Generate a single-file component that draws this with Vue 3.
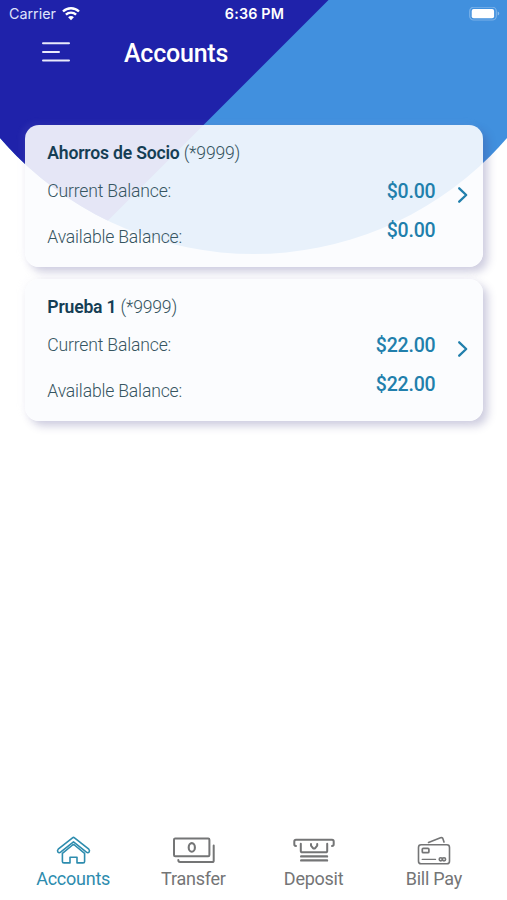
<script setup>
const accounts = [
  { name: 'Ahorros de Socio', number: '(*9999)', current: '$0.00', available: '$0.00' },
  { name: 'Prueba 1', number: '(*9999)', current: '$22.00', available: '$22.00' },
]
const tabs = [
  { id: 'accounts', label: 'Accounts' },
  { id: 'transfer', label: 'Transfer' },
  { id: 'deposit', label: 'Deposit' },
  { id: 'billpay', label: 'Bill Pay' },
]
</script>

<template>
  <div class="screen">
    <svg class="backdrop" viewBox="0 0 507 260" aria-hidden="true">
      <defs>
        <clipPath id="dome"><circle cx="253.5" cy="-81" r="335" /></clipPath>
      </defs>
      <g clip-path="url(#dome)">
        <rect width="507" height="260" fill="#4190de" />
        <path d="M0 0H328.5L68.5 260H0Z" fill="#1f22aa" />
      </g>
    </svg>

    <div class="status">
      <div class="carrier">
        <span>Carrier</span>
        <svg width="18" height="14" viewBox="0 0 18 14" fill="none" stroke="#fff" stroke-width="2.4">
          <path d="M1 4.5C5.5.1 12.5.1 17 4.5" />
          <path d="M3.9 7.7C6.8 4.9 11.2 4.9 14.1 7.7" />
          <path d="M9 13.2 6.1 10.2C7.7 8.7 10.3 8.7 11.9 10.2Z" fill="#fff" stroke="none" />
        </svg>
      </div>
      <span class="time">6:36 PM</span>
      <svg class="battery" width="31" height="14" viewBox="0 0 31 14">
        <rect x=".7" y=".2" width="26.6" height="12.8" rx="4" fill="none" stroke="#fff" stroke-opacity=".3" stroke-width="1.2" />
        <rect x="2.7" y="2" width="22.4" height="9.2" rx="2" fill="#fff" />
        <path d="M28.7 4.6v4q1.6-.5 1.6-2t-1.6-2Z" fill="#fff" fill-opacity=".4" />
      </svg>
    </div>

    <header class="header">
      <svg class="menu" width="28" height="22" viewBox="0 0 28 22" stroke="#e9eafb" stroke-width="2" stroke-linecap="round">
        <path d="M1 2.3H27M1 11H17M1 19.5H27" />
      </svg>
      <h1>Accounts</h1>
    </header>

    <main class="list">
      <article v-for="a in accounts" :key="a.name" class="card">
        <div class="info">
          <div class="title"><b>{{ a.name }}</b> <span>{{ a.number }}</span></div>
          <div class="label">Current Balance:</div>
          <div class="label second">Available Balance:</div>
        </div>
        <div class="amounts">
          <div>{{ a.current }}</div>
          <div>{{ a.available }}</div>
        </div>
        <svg class="chevron" width="12" height="18" viewBox="0 0 12 18" fill="none" stroke="#217fac" stroke-width="2.3" stroke-linecap="round" stroke-linejoin="round">
          <path d="M2.2 2.3 9.2 9 2.2 15.7" />
        </svg>
      </article>
    </main>

    <nav class="tabs">
      <div v-for="t in tabs" :key="t.id" class="tab" :class="{ active: t.id === 'accounts' }">
        <svg width="44" height="30" viewBox="0 0 44 30" fill="none" stroke="currentColor" stroke-width="1.6" stroke-linecap="round" stroke-linejoin="round">
          <g v-if="t.id === 'accounts'" transform="translate(.5 0)">
            <path d="M21 2.8Q22 2 23 2.8L37.3 14.2Q38.5 15.4 37.6 17Q36.5 18.4 34.9 17.2L22 6.9 9.1 17.2Q7.5 18.4 6.4 17Q5.5 15.4 6.7 14.2Z" />
            <path d="M10.9 18.4V26.4Q10.9 27.9 12.4 27.9H18.5V22.2H25.5V27.9H31.6Q33.1 27.9 33.1 26.4V18.4L22.9 10Q22 9.3 21.1 10Z" />
          </g>
          <g v-else-if="t.id === 'transfer'" transform="translate(.5 0)" stroke-width="2">
            <rect x="2.5" y="3.5" width="35.4" height="17.8" rx="1.2" />
            <ellipse cx="20.3" cy="12.4" rx="3.1" ry="4.3" stroke-width="2.1" />
            <path d="M6.8 25Q6.8 27 8.6 27H40.8Q42.2 27 42.2 25.4V10.4" />
          </g>
          <g v-else-if="t.id === 'deposit'" stroke-width="2">
            <path d="M4 11Q2.3 11 2.3 9.3V6.5Q2.3 4.8 4 4.8H40Q41.7 4.8 41.7 6.5V9.3Q41.7 11 40 11" />
            <path d="M8.8 8.8V15.9Q8.8 17.3 10.4 17.3H33.6Q35.2 17.3 35.2 15.9V8.8" />
            <path d="M19 9V10.6L21.2 13.4H23L25.2 10.6V9" />
            <path d="M9.2 21.4H35M9.2 25.4H35" stroke-width="2.4" />
          </g>
          <g v-else stroke-width="1.6">
            <rect x="6.5" y="9.8" width="31" height="19" rx="2.6" />
            <path d="M16.5 7.5 28.5 2.8Q30.4 2.1 31 3.9L32 7.1" />
            <rect x="10.3" y="13.3" width="6.6" height="4.4" rx="1" stroke-width="1.7" />
            <path d="M10.3 24.4H23.5" stroke-width="1.4" />
            <circle cx="28.8" cy="24.3" r="1.6" />
            <circle cx="32" cy="24.3" r="1.6" />
          </g>
        </svg>
        <span>{{ t.label }}</span>
      </div>
    </nav>
  </div>
</template>

<style>
body { margin: 0; background: #fff; }
</style>

<style scoped>
.screen {
  position: relative;
  display: flex;
  flex-direction: column;
  width: 507px;
  height: 900px;
  overflow: hidden;
  background: #fff;
  font-family: Roboto, sans-serif;
}
.backdrop { position: absolute; top: 0; left: 0; width: 507px; height: 260px; }
.status {
  position: relative;
  display: grid;
  grid-template-columns: 1fr auto 1fr;
  align-items: center;
  height: 28px;
  padding: 0 7px 0 9px;
  color: #fff;
  font: 400 14.3px/28px Inter, sans-serif;
}
.carrier { display: flex; align-items: center; gap: 6px; color: #dfe2fb; }
.time { font-weight: 600; letter-spacing: .2px; }
.battery { justify-self: end; }
.header {
  position: relative;
  display: flex;
  align-items: center;
  gap: 54px;
  height: 50px;
  padding: 0 42px;
}
.menu { margin-bottom: 2px; }
.header h1 { margin: 1px 0 0; color: #fff; font-size: 25px; font-weight: 500; letter-spacing: -.22px; line-height: 30px; }
.list {
  position: relative;
  display: flex;
  flex-direction: column;
  gap: 12px;
  padding: 46.5px 24px 0 25px;
}
.card {
  display: flex;
  box-sizing: border-box;
  height: 142px;
  padding: 0 14.5px 0 22.3px;
  border-radius: 14px;
  background: rgba(251, 252, 254, .9);
  box-shadow: 5px 5px 9px rgba(62, 58, 130, .25), -3px -2px 7px rgba(200, 205, 225, .08);
  color: #365561;
}
.info { flex: 1; font-weight: 300; font-size: 17.6px; letter-spacing: -.18px; line-height: 24px; padding-top: 16px; }
.title { letter-spacing: -.2px; }
.title b { color: #153e54; font-weight: 600; }
.label { margin-top: 14px; }
.label.second { margin-top: 22px; }
.amounts {
  padding-top: 47px;
  color: #217fac;
  font-size: 19.5px;
  font-weight: 500;
  letter-spacing: -.18px;
  line-height: 39px;
  text-align: right;
}
.chevron { margin: 61px 0 0 21px; }
.tabs {
  display: grid;
  grid-template-columns: repeat(4, 1fr);
  margin-top: auto;
  height: 65px;
  padding: 0 13px;
}
.tab { display: flex; flex-direction: column; align-items: center; color: #747576; font-size: 18px; letter-spacing: -.25px; line-height: 22px; }
.tab span { margin-top: 3px; }
.tab.active { color: #2d8cae; }
</style>
